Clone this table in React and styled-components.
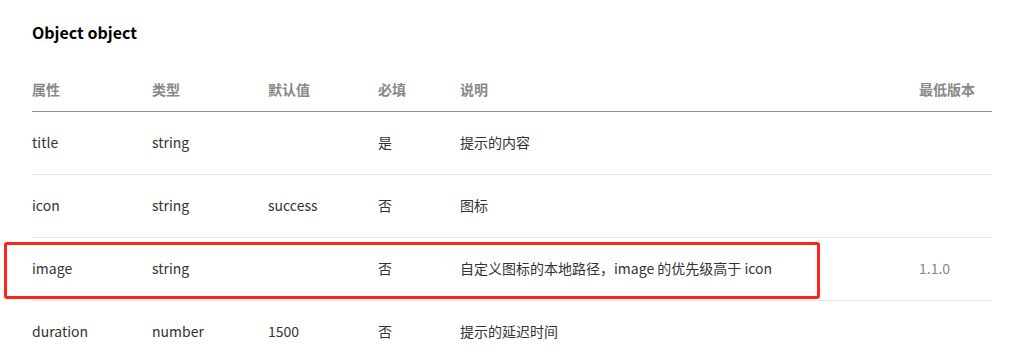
import React from 'react';
import styled, { createGlobalStyle } from 'styled-components';

const Global = createGlobalStyle`
  html, body { margin: 0; padding: 0; background: #fff; }
  body {
    font-family: "Segoe UI", "Noto Sans CJK SC", "Noto Sans", sans-serif;
    color: #333;
  }
`;

const Page = styled.div`
  padding: 20px 44px 0 32px;
  width: 960px;
`;

const Title = styled.h3`
  margin: 0 0 25px;
  font-size: 16px;
  line-height: 24px;
  font-weight: 700;
  color: #000;
`;

const cols = '120px 116px 110px 82px 459px 73px';

const Row = styled.div`
  position: relative;
  display: grid;
  grid-template-columns: ${cols};
  align-items: center;
  height: ${p => (p.$head ? 42 : 62)}px;
  border-bottom: 1px solid ${p => (p.$head ? '#8c8c8c' : '#e6e6e6')};
`;

const Cell = styled.div`
  padding-bottom: 2px;
  font-size: 14px;
  line-height: 20px;
  font-weight: ${p => (p.$head ? 700 : 400)};
  color: ${p => (p.$head || p.$muted ? '#888' : '#333')};
  white-space: nowrap;
`;

// red annotation frame drawn over the highlighted row
const Highlight = styled.div`
  position: absolute;
  left: -28px;
  top: 4px;
  width: 810px;
  height: 51px;
  border: 3px solid #ff2318;
  border-radius: 3px;
  pointer-events: none;
`;

const head = ['属性', '类型', '默认值', '必填', '说明', '最低版本'];

const rows = [
  { name: 'title', type: 'string', def: '', req: '是', desc: '提示的内容', ver: '' },
  { name: 'icon', type: 'string', def: 'success', req: '否', desc: '图标', ver: '' },
  { name: 'image', type: 'string', def: '', req: '否', desc: '自定义图标的本地路径，image 的优先级高于 icon', ver: '1.1.0', mark: true },
  { name: 'duration', type: 'number', def: '1500', req: '否', desc: '提示的延迟时间', ver: '' },
];

export default function App() {
  return (
    <Page>
      <Global />
      <Title>Object object</Title>
      <Row $head>
        {head.map(h => <Cell $head key={h}>{h}</Cell>)}
      </Row>
      {rows.map(r => (
        <Row key={r.name}>
          <Cell>{r.name}</Cell>
          <Cell>{r.type}</Cell>
          <Cell>{r.def}</Cell>
          <Cell>{r.req}</Cell>
          <Cell>{r.desc}</Cell>
          <Cell $muted>{r.ver}</Cell>
          {r.mark && <Highlight />}
        </Row>
      ))}
    </Page>
  );
}
